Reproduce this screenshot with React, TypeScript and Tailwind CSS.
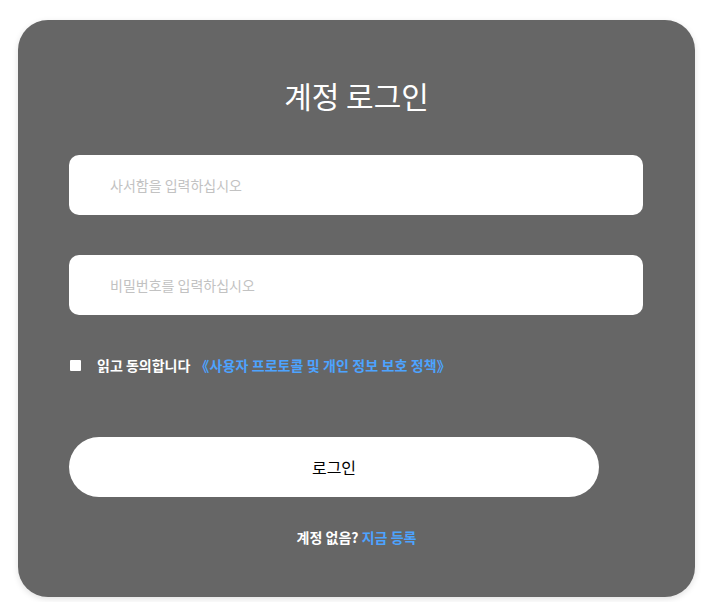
export default function App() {
  return (
    <div className="min-h-[602px] w-full bg-white pt-[20px] pl-[18px]" style={{ fontFamily: '"Noto Sans CJK KR", "Noto Sans", sans-serif' }}>
      <div className="w-[677px] h-[577px] rounded-[30px] bg-[#666666] px-[51px] pt-[55px] shadow-[0_2px_6px_rgba(0,0,0,0.12)]">
        <h1 className="text-center text-[30px] leading-[40px] text-white font-normal">계정 로그인</h1>
        <div className="mt-[40px] flex h-[60px] w-[574px] items-center rounded-[10px] bg-white pl-[41px]">
          <span className="text-[14px] text-[#c2c2c2]">사서함을 입력하십시오</span>
        </div>
        <div className="mt-[40px] flex h-[60px] w-[574px] items-center rounded-[10px] bg-white pl-[41px]">
          <span className="text-[14px] text-[#c2c2c2]">비밀번호를 입력하십시오</span>
        </div>
        <div className="mt-[40px] flex items-center text-[14px] font-bold">
          <span className="ml-[1px] h-[11px] w-[11px] rounded-[1px] bg-white" />
          <span className="ml-[16px] text-white">읽고 동의합니다</span>
          <span className="ml-[5px] text-[#4da3ff] tracking-[0.1px]">《사용자 프로토콜 및 개인 정보 보호 정책》</span>
        </div>
        <div className="mt-[61px] flex h-[60px] w-[530px] items-center justify-center rounded-full bg-white">
          <span className="text-[16px] text-black">로그인</span>
        </div>
        <div className="mt-[30px] text-center text-[14px] font-bold">
          <span className="text-white">계정 없음? </span>
          <span className="text-[#4da3ff]">지금 등록</span>
        </div>
      </div>
    </div>
  );
}
